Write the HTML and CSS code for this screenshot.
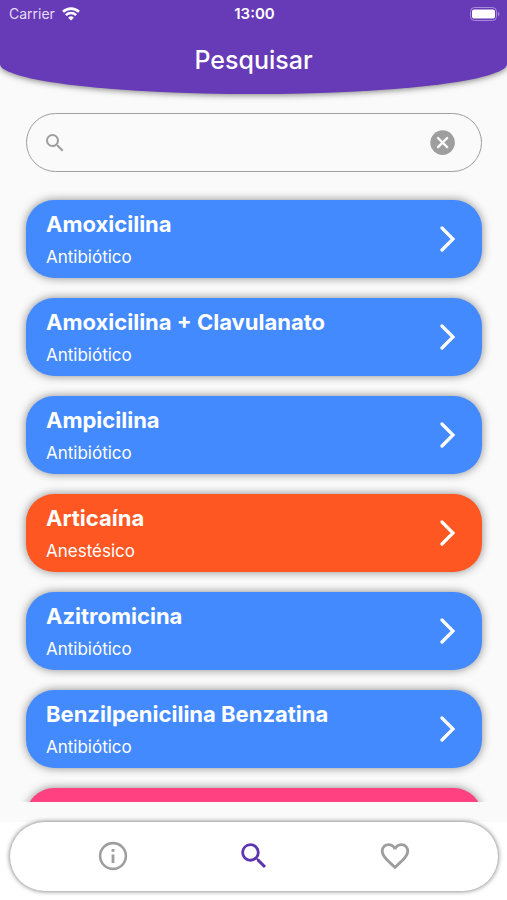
FILE: index.html
```html
<!DOCTYPE html>
<html lang="pt">
<head>
<meta charset="utf-8">
<meta name="viewport" content="width=device-width, initial-scale=1">
<title>Pesquisar</title>
<link rel="stylesheet" href="styles.css">
</head>
<body>
<header class="header">
  <div class="status">
    <div class="carrier">
      <span>Carrier</span>
      <svg class="wifi" viewBox="0 0 18 14" aria-hidden="true"><path d="M1 4.8a11.6 11.6 0 0 1 16 0" /><path d="M3.9 8.1a7.4 7.4 0 0 1 10.2 0" /><path class="wifi-dot" d="M9 13.6 6.1 10.7a4.2 4.2 0 0 1 5.8 0z" /></svg>
    </div>
    <time class="clock">13:00</time>
    <svg class="battery" viewBox="0 0 30 14" aria-hidden="true"><rect class="battery-case" x=".5" y=".5" width="26" height="13" rx="4" /><rect x="2" y="2.4" width="23" height="9.2" rx="2" /><path class="battery-tip" d="M28 4.8c2 .8 2 3.6 0 4.4z" /></svg>
  </div>
  <h1 class="title">Pesquisar</h1>
</header>

<main class="content">
  <form class="search" role="search">
    <svg class="search-icon" viewBox="0 0 24 24" aria-hidden="true"><path d="M15.5 14h-.79l-.28-.27A6.47 6.47 0 0 0 16 9.5 6.5 6.5 0 1 0 9.5 16c1.61 0 3.09-.59 4.23-1.57l.27.28v.79l5 4.99L20.49 19l-4.99-5zm-6 0C7.01 14 5 11.99 5 9.5S7.01 5 9.5 5 14 7.01 14 9.5 11.99 14 9.5 14z"/></svg>
    <input class="search-input" type="text" aria-label="Pesquisar">
    <button class="clear" type="reset" aria-label="Limpar">
      <svg viewBox="0 0 26 26" aria-hidden="true"><circle cx="12.6" cy="12.6" r="12.3"/><path d="m8 8 9.2 9.2m0-9.2L8 17.2"/></svg>
    </button>
  </form>

  <div class="list">
    <a class="card" href="#"><span class="card-text"><strong class="name">Amoxicilina</strong><span class="kind">Antibiótico</span></span><svg class="chevron" viewBox="0 0 16 26" aria-hidden="true"><path d="m2 2 11 11L2 24"/></svg></a>
    <a class="card" href="#"><span class="card-text"><strong class="name">Amoxicilina + Clavulanato</strong><span class="kind">Antibiótico</span></span><svg class="chevron" viewBox="0 0 16 26" aria-hidden="true"><path d="m2 2 11 11L2 24"/></svg></a>
    <a class="card" href="#"><span class="card-text"><strong class="name">Ampicilina</strong><span class="kind">Antibiótico</span></span><svg class="chevron" viewBox="0 0 16 26" aria-hidden="true"><path d="m2 2 11 11L2 24"/></svg></a>
    <a class="card anesthetic" href="#"><span class="card-text"><strong class="name">Articaína</strong><span class="kind">Anestésico</span></span><svg class="chevron" viewBox="0 0 16 26" aria-hidden="true"><path d="m2 2 11 11L2 24"/></svg></a>
    <a class="card" href="#"><span class="card-text"><strong class="name">Azitromicina</strong><span class="kind">Antibiótico</span></span><svg class="chevron" viewBox="0 0 16 26" aria-hidden="true"><path d="m2 2 11 11L2 24"/></svg></a>
    <a class="card" href="#"><span class="card-text"><strong class="name">Benzilpenicilina Benzatina</strong><span class="kind">Antibiótico</span></span><svg class="chevron" viewBox="0 0 16 26" aria-hidden="true"><path d="m2 2 11 11L2 24"/></svg></a>
    <div class="card pink"></div>
  </div>
</main>

<footer class="footer">
  <nav class="nav">
    <a class="tab" href="#" aria-label="Informações"><svg viewBox="0 0 24 24" aria-hidden="true"><circle class="ring" cx="12" cy="12" r="9.1"/><path d="M11 7.1h2v1.9h-2zm0 3.9h2v6h-2z"/></svg></a>
    <a class="tab active" href="#" aria-label="Pesquisar"><svg viewBox="0 0 24 24" aria-hidden="true"><path d="M15.5 14h-.79l-.28-.27A6.47 6.47 0 0 0 16 9.5 6.5 6.5 0 1 0 9.5 16c1.61 0 3.09-.59 4.23-1.57l.27.28v.79l5 4.99L20.49 19l-4.99-5zm-6 0C7.01 14 5 11.99 5 9.5S7.01 5 9.5 5 14 7.01 14 9.5 11.99 14 9.5 14z"/></svg></a>
    <a class="tab" href="#" aria-label="Favoritos"><svg viewBox="0 0 24 24" aria-hidden="true"><path d="M16.5 3c-1.74 0-3.41.81-4.5 2.09C10.91 3.81 9.24 3 7.5 3 4.42 3 2 5.42 2 8.5c0 3.78 3.4 6.86 8.55 11.54L12 21.35l1.45-1.32C18.6 15.36 22 12.28 22 8.5 22 5.42 19.58 3 16.5 3zm-4.4 15.55-.1.1-.1-.1C7.14 14.24 4 11.39 4 8.5 4 6.5 5.5 5 7.5 5c1.54 0 3.04.99 3.57 2.36h1.87C13.46 5.99 14.96 5 16.5 5c2 0 3.5 1.5 3.5 3.5 0 2.89-3.14 5.74-7.9 10.05z"/></svg></a>
  </nav>
</footer>
</body>
</html>
```
FILE: styles.css
```css
* {
  box-sizing: border-box;
}

body {
  margin: 0;
  height: 100vh;
  display: flex;
  flex-direction: column;
  background: #fafafa;
  font-family: Inter, "Liberation Sans", sans-serif;
  overflow: hidden;
}

a {
  text-decoration: none;
}

.header {
  flex: none;
  padding-bottom: 14px;
  background: #673ab7;
  color: #fff;
  border-radius: 0 0 50% 50% / 0 0 30px 30px;
  box-shadow: 0 1px 6px rgba(0, 0, 0, 0.5);
}

.status {
  height: 27px;
  padding: 0 7px 0 9px;
  display: grid;
  grid-template-columns: 1fr auto 1fr;
  align-items: center;
  font-size: 15px;
}

.carrier {
  display: flex;
  align-items: center;
  gap: 7px;
  color: #e6dcf5;
  font-size: 14px;
}

.wifi {
  width: 18px;
  height: 14px;
  fill: none;
  stroke: #fff;
  stroke-width: 2.6;
}

.wifi .wifi-dot {
  fill: #fff;
  stroke: none;
}

.clock {
  font-weight: 600;
}

.battery {
  justify-self: end;
  width: 30px;
  height: 14px;
  fill: #fff;
}

.battery .battery-case {
  fill: none;
  stroke: #a98cd9;
}

.battery .battery-tip {
  fill: #a98cd9;
}

.title {
  margin: 13px 0 0;
  font-size: 25px;
  line-height: 40px;
  font-weight: 500;
  text-align: center;
}

.content {
  flex: 1;
  min-height: 0;
  display: flex;
  flex-direction: column;
  padding: 19px 0 20px;
}

.search {
  flex: none;
  display: flex;
  align-items: center;
  height: 59px;
  margin: 0 25px 0 26px;
  padding: 0 25px 0 16px;
  border: 1px solid #9e9e9e;
  border-radius: 30px;
}

.search-icon {
  width: 24px;
  height: 24px;
  fill: #9e9e9e;
}

.search-input {
  flex: 1;
  min-width: 0;
  padding: 0 12px;
  border: 0;
  outline: 0;
  background: none;
  font: 18px Inter, sans-serif;
}

.clear {
  width: 26px;
  height: 26px;
  padding: 0;
  border: 0;
  background: none;
}

.clear svg {
  display: block;
  fill: #9e9e9e;
  stroke: #fafafa;
  stroke-linecap: round;
  stroke-width: 2.4;
}

.clear circle {
  stroke: none;
}

.list {
  flex: 1;
  min-height: 0;
  display: flex;
  flex-direction: column;
  gap: 20px;
  padding: 28px 25px 0 26px;
  overflow: hidden;
}

.card {
  flex: none;
  display: flex;
  align-items: center;
  justify-content: space-between;
  height: 78px;
  padding: 0 26px 0 20px;
  border-radius: 28px;
  background: #448aff;
  color: #fff;
  box-shadow: 0 0 10px rgba(0, 0, 0, 0.45);
}

.card.anesthetic {
  background: #ff5722;
}

.card.pink {
  background: #ff4081;
}

.card-text {
  display: flex;
  flex-direction: column;
  gap: 5px;
  padding-top: 3px;
}

.name {
  font-size: 22px;
  line-height: 28px;
  font-weight: 700;
}

.kind {
  font-size: 17px;
  line-height: 28px;
}

.chevron {
  width: 16px;
  height: 26px;
  fill: none;
  stroke: #fff;
  stroke-width: 3.2;
  stroke-linecap: round;
}

.footer {
  flex: none;
  padding: 0 9px 9px 10px;
  background: #fff;
}

.nav {
  display: grid;
  grid-template-columns: repeat(3, 1fr);
  height: 69px;
  padding: 0 32px 2px;
  border-radius: 35px;
  background: #fff;
  box-shadow: 0 0 5px rgba(0, 0, 0, 0.6);
}

.tab {
  display: flex;
  align-items: center;
  justify-content: center;
}

.tab svg {
  width: 34px;
  height: 34px;
  fill: #9e9e9e;
}

.tab .ring {
  fill: none;
  stroke: #9e9e9e;
  stroke-width: 1.8;
}

.tab.active svg {
  fill: #5e35b1;
}
```
